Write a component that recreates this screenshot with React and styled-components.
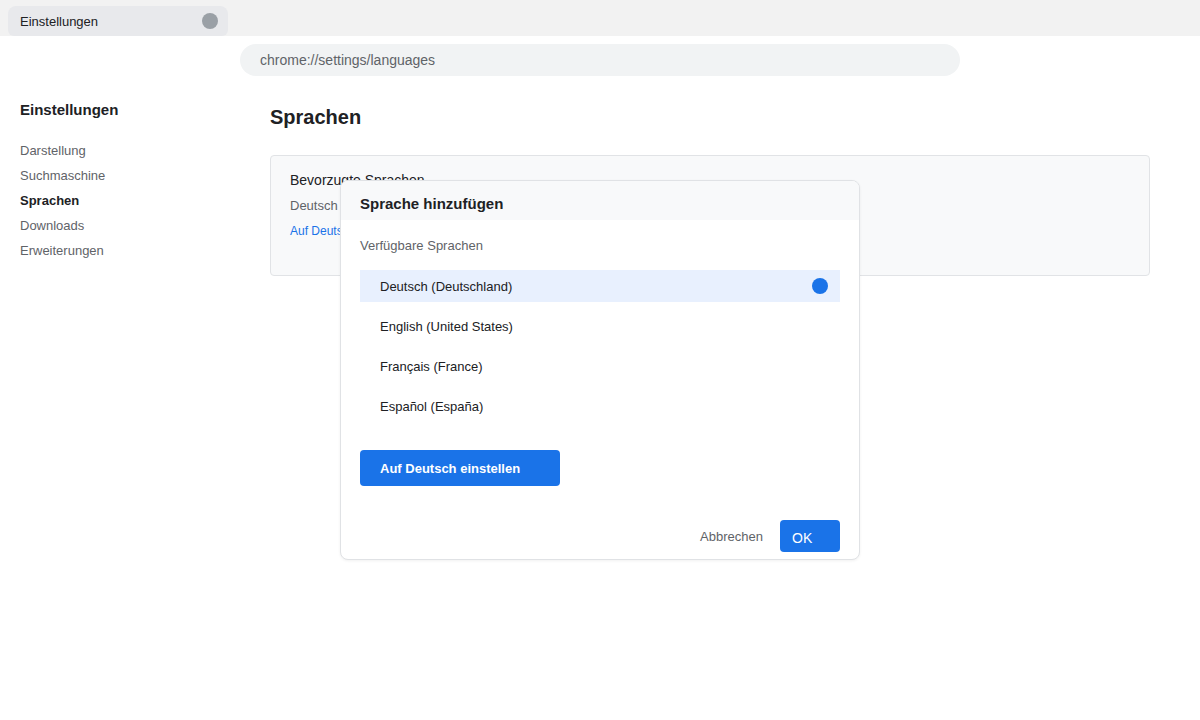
import React from "react";
import styled, { createGlobalStyle } from "styled-components";

const Global = createGlobalStyle`
  html, body { margin: 0; padding: 0; background: #ffffff; }
  body { font-family: "Liberation Sans", Arial, sans-serif; color: #202124; }
  * { box-sizing: border-box; }
`;

const Page = styled.div`
  position: relative;
  width: 1200px;
  height: 720px;
  overflow: hidden;
  background: #fff;
`;

const TabBar = styled.div`
  height: 36px;
  background: #f2f2f2;
  display: flex;
  align-items: flex-end;
  padding-left: 8px;
`;

const Tab = styled.div`
  width: 220px;
  height: 30px;
  background: #e8e9ec;
  border-radius: 8px 8px 6px 6px;
  display: flex;
  align-items: center;
  justify-content: space-between;
  padding: 0 10px 0 12px;
  font-size: 13px;
  color: #202124;
`;

const TabDot = styled.span`
  width: 16px;
  height: 16px;
  border-radius: 50%;
  background: #9aa0a6;
`;

const AddressRow = styled.div`
  padding: 8px 0 0 240px;
`;

const AddressBar = styled.div`
  width: 720px;
  height: 32px;
  border-radius: 16px;
  background: #f1f3f4;
  display: flex;
  align-items: center;
  padding-left: 20px;
  font-size: 14px;
  color: #5f6368;
`;

const Content = styled.div`
  display: grid;
  grid-template-columns: 270px 880px;
`;

const Sidebar = styled.nav`
  padding: 25px 0 0 20px;
`;

const SideTitle = styled.div`
  font-size: 15px;
  line-height: 18px;
  font-weight: 700;
  color: #202124;
`;

const NavList = styled.div`
  margin-top: 19px;
  display: flex;
  flex-direction: column;
`;

const NavItem = styled.div`
  font-size: 13px;
  line-height: 25px;
  color: ${(p) => (p.$active ? "#202124" : "#5f6368")};
  font-weight: ${(p) => (p.$active ? 700 : 400)};
`;

const Main = styled.main`
  padding-top: 29px;
`;

const Heading = styled.h1`
  margin: 0;
  font-size: 20px;
  line-height: 24px;
  font-weight: 700;
  color: #202124;
`;

const Card = styled.section`
  margin-top: 26px;
  height: 121px;
  background: #f8f9fa;
  border: 1px solid #e1e3e6;
  border-radius: 4px;
  padding: 15px 19px 0;
  display: flex;
  flex-direction: column;
`;

const CardTitle = styled.div`
  font-size: 14px;
  line-height: 18px;
  color: #202124;
`;

const CardText = styled.div`
  margin-top: 9px;
  font-size: 13px;
  line-height: 16px;
  color: #5f6368;
`;

const CardLink = styled.div`
  margin-top: 10px;
  font-size: 12px;
  line-height: 14px;
  color: #1a73e8;
`;

const Dialog = styled.div`
  position: absolute;
  left: 340px;
  top: 180px;
  width: 520px;
  height: 380px;
  background: #fff;
  border: 1px solid #e0e2e5;
  border-radius: 8px;
  box-shadow: 0 1px 3px rgba(0, 0, 0, 0.06);
  overflow: hidden;
  display: flex;
  flex-direction: column;
`;

const DialogHeader = styled.div`
  height: 39px;
  background: #f8f9fa;
  padding: 14px 19px 0;
  font-size: 15px;
  line-height: 18px;
  font-weight: 700;
  color: #202124;
`;

const DialogBody = styled.div`
  padding: 19px 19px 0;
  display: flex;
  flex-direction: column;
`;

const Label = styled.div`
  font-size: 13px;
  line-height: 14px;
  color: #5f6368;
`;

const LangList = styled.div`
  margin-top: 17px;
  display: flex;
  flex-direction: column;
  gap: 8px;
`;

const LangItem = styled.div`
  height: 32px;
  display: flex;
  align-items: center;
  justify-content: space-between;
  padding: 0 12px 0 20px;
  font-size: 13px;
  color: #202124;
  background: ${(p) => (p.$selected ? "#e8f0fe" : "transparent")};
`;

const Radio = styled.span`
  width: 16px;
  height: 16px;
  border-radius: 50%;
  background: #1a73e8;
`;

const PrimaryButton = styled.button`
  margin-top: 28px;
  width: 200px;
  height: 36px;
  border: none;
  border-radius: 4px;
  background: #1a73e8;
  color: #fff;
  font-family: inherit;
  font-size: 13px;
  font-weight: 700;
  text-align: left;
  padding: 0 20px;
`;

const Footer = styled.div`
  margin-top: 34px;
  display: flex;
  justify-content: flex-end;
  align-items: center;
  gap: 17px;
  padding-right: 19px;
`;

const TextButton = styled.span`
  font-size: 13px;
  color: #5f6368;
`;

const OkButton = styled.button`
  width: 60px;
  height: 32px;
  border: none;
  border-radius: 4px;
  background: #1a73e8;
  color: #fff;
  font-family: inherit;
  font-size: 14px;
  text-align: left;
  padding: 3px 12px 0;
`;

const navItems = ["Darstellung", "Suchmaschine", "Sprachen", "Downloads", "Erweiterungen"];
const languages = [
  "Deutsch (Deutschland)",
  "English (United States)",
  "Français (France)",
  "Español (España)",
];

export default function App() {
  return (
    <Page>
      <Global />
      <TabBar>
        <Tab>
          <span>Einstellungen</span>
          <TabDot />
        </Tab>
      </TabBar>
      <AddressRow>
        <AddressBar>chrome://settings/languages</AddressBar>
      </AddressRow>
      <Content>
        <Sidebar>
          <SideTitle>Einstellungen</SideTitle>
          <NavList>
            {navItems.map((n) => (
              <NavItem key={n} $active={n === "Sprachen"}>
                {n}
              </NavItem>
            ))}
          </NavList>
        </Sidebar>
        <Main>
          <Heading>Sprachen</Heading>
          <Card>
            <CardTitle>Bevorzugte Sprachen</CardTitle>
            <CardText>Deutsch</CardText>
            <CardLink>Auf Deutsch einstellen</CardLink>
          </Card>
        </Main>
      </Content>
      <Dialog>
        <DialogHeader>Sprache hinzufügen</DialogHeader>
        <DialogBody>
          <Label>Verfügbare Sprachen</Label>
          <LangList>
            {languages.map((l, i) => (
              <LangItem key={l} $selected={i === 0}>
                <span>{l}</span>
                {i === 0 && <Radio />}
              </LangItem>
            ))}
          </LangList>
          <div>
            <PrimaryButton>Auf Deutsch einstellen</PrimaryButton>
          </div>
        </DialogBody>
        <Footer>
          <TextButton>Abbrechen</TextButton>
          <OkButton>OK</OkButton>
        </Footer>
      </Dialog>
    </Page>
  );
}
